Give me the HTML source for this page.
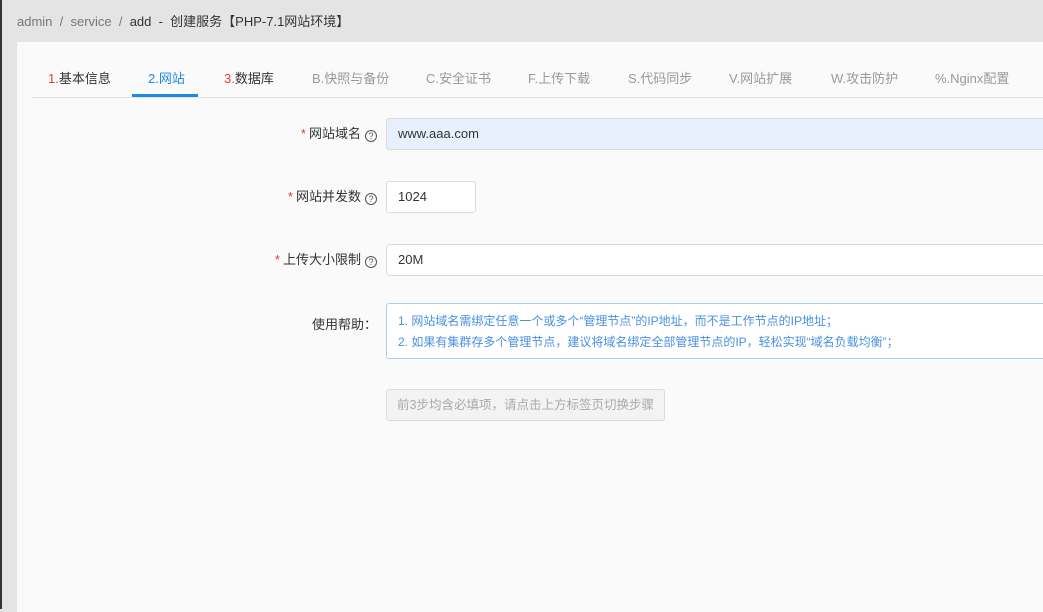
<!DOCTYPE html>
<html><head><meta charset="utf-8"><style>
*{box-sizing:border-box;margin:0;padding:0}
body{width:1043px;height:609px;overflow:hidden;background:#e4e4e4;font-family:"Liberation Sans","Noto Sans CJK SC",sans-serif;font-size:13px;color:#333;position:relative}
.lb{position:absolute;left:0;top:0;width:2px;height:609px;background:#333}
.crumb{position:absolute;left:17px;top:11px;color:#777;font-size:13px}
.crumb b{font-weight:normal;color:#333}
.card{position:absolute;left:17px;top:42px;width:1030px;height:570px;background:#fafafa}
.tabs{position:absolute;left:15px;top:0;right:0;height:56px;border-bottom:1px solid #e4e4e4}
.tab{position:absolute;top:26px;color:#999;font-size:13px}
.tab .r{color:#e6431e}
.act{color:#1e88e5}
.bar{position:absolute;left:100px;top:52px;width:66px;height:3px;background:#1e88e5}
.lab{position:absolute;right:670px;font-size:13px;color:#333;white-space:nowrap}
.lab i{color:#e53935;font-style:normal;margin-right:3px}
.q{display:inline-block;width:12px;height:12px;border:1px solid #555;border-radius:50%;font-size:9px;line-height:10px;text-align:center;margin-left:4px;vertical-align:-1px;color:#555}
.inp{position:absolute;left:369px;height:32px;border:1px solid #dcdcdc;border-radius:3px;background:#fff;padding-left:11px;line-height:30px;font-size:13px;color:#333}
.help{position:absolute;left:369px;top:261px;width:700px;height:56px;border:1px solid #a9cdf3;border-radius:3px;background:#fff;color:#4a90e2;padding:7px 11px;line-height:21px;font-size:12px}
.btn{position:absolute;left:369px;top:347px;width:279px;height:32px;border:1px solid #dcdcdc;border-radius:3px;background:#f3f3f3;color:#aaa;text-align:center;line-height:30px;font-size:12.5px}
</style></head><body>
<div class="lb"></div>
<div class="crumb">admin &nbsp;/&nbsp; service &nbsp;/&nbsp; <b>add &nbsp;- &nbsp;创建服务【PHP-7.1网站环境】</b></div>
<div class="card">
<div class="tabs">
<span class="tab" style="left:16px;color:#333"><span class="r">1.</span>基本信息</span>
<span class="tab act" style="left:116px">2.网站</span>
<span class="tab" style="left:192px;color:#333"><span class="r">3.</span>数据库</span>
<span class="tab" style="left:280px">B.快照与备份</span>
<span class="tab" style="left:394px">C.安全证书</span>
<span class="tab" style="left:496px">F.上传下载</span>
<span class="tab" style="left:596px">S.代码同步</span>
<span class="tab" style="left:697px">V.网站扩展</span>
<span class="tab" style="left:799px">W.攻击防护</span>
<span class="tab" style="left:903px">%.Nginx配置</span>
<div class="bar"></div>
</div>
<div class="lab" style="top:81px"><i>*</i>网站域名<span class="q">?</span></div>
<div class="inp" style="top:76px;width:700px;background:#e8f0fe">www.aaa.com</div>
<div class="lab" style="top:144px"><i>*</i>网站并发数<span class="q">?</span></div>
<div class="inp" style="top:139px;width:90px">1024</div>
<div class="lab" style="top:207px"><i>*</i>上传大小限制<span class="q">?</span></div>
<div class="inp" style="top:202px;width:700px">20M</div>
<div class="lab" style="top:272px">使用帮助：</div>
<div class="help">1. 网站域名需绑定任意一个或多个“管理节点”的IP地址，而不是工作节点的IP地址；<br>2. 如果有集群存多个管理节点，建议将域名绑定全部管理节点的IP，轻松实现“域名负载均衡”；</div>
<div class="btn">前3步均含必填项，请点击上方标签页切换步骤</div>
</div>
</body></html>
